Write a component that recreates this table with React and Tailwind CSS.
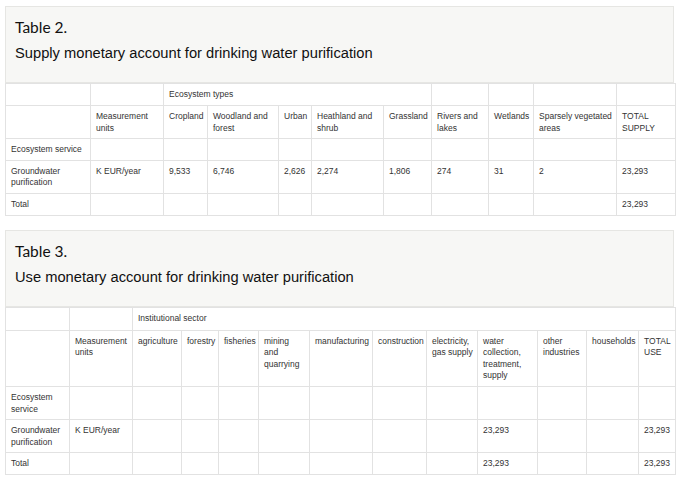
const T2_COLS = ['w-[85px]', 'w-[73px]', 'w-[44px]', 'w-[71px]', 'w-[33px]', 'w-[72px]', 'w-[48px]', 'w-[57px]', 'w-[45px]', 'w-[83px]', 'w-[59px]'];
const T3_COLS = ['w-[64px]', 'w-[63px]', 'w-[49px]', 'w-[37px]', 'w-[40px]', 'w-[51px]', 'w-[63px]', 'w-[54px]', 'w-[51px]', 'w-[60px]', 'w-[49px]', 'w-[52px]', 'w-[37px]'];

// line breaks follow the reference's wrapping
const cell = 'border border-[#e2e2e2] align-top pl-[5px] pr-[2px] pt-[5px] pb-[4px] text-left font-normal whitespace-pre-line';

function Caption({ num, title, className = '' }) {
  return (
    <div className={`bg-[#f7f7f5] border border-[#e6e6e3] pl-[9px] pt-[10px] w-[669px] h-[77px] ${className}`}>
      <div className="text-[15.5px] leading-[20px] text-[#111] font-['Lato','Open_Sans',sans-serif]">
        Table {num}.
      </div>
      <div className="mt-[6px] text-[14.7px] leading-[20px] text-[#111] font-['Liberation_Sans',Arial,sans-serif]">
        {title}
      </div>
    </div>
  );
}

function Grid({ cols, rows, heights }) {
  return (
    <table className="table-fixed border-collapse w-[670px] bg-white text-[8.5px] leading-[11.6px] text-[#333] font-['Liberation_Sans',Arial,sans-serif]">
      <colgroup>
        {cols.map((w, i) => (
          <col key={i} className={w} />
        ))}
      </colgroup>
      <tbody>
        {rows.map((row, r) => (
          <tr key={r} className={heights[r]}>
            {row.map((c, i) => {
              const [text, span] = Array.isArray(c) ? c : [c, 1];
              return (
                <td key={i} colSpan={span} className={cell}>
                  {text}
                </td>
              );
            })}
          </tr>
        ))}
      </tbody>
    </table>
  );
}

export default function App() {
  const t2 = [
    ['', '', ['Ecosystem types', 5], '', '', '', ''],
    ['', 'Measurement\nunits', 'Cropland', 'Woodland and\nforest', 'Urban', 'Heathland and\nshrub', 'Grassland', 'Rivers and\nlakes', 'Wetlands', 'Sparsely vegetated\nareas', 'TOTAL\nSUPPLY'],
    ['Ecosystem service', '', '', '', '', '', '', '', '', '', ''],
    ['Groundwater\npurification', 'K EUR/year', '9,533', '6,746', '2,626', '2,274', '1,806', '274', '31', '2', '23,293'],
    ['Total', '', '', '', '', '', '', '', '', '', '23,293'],
  ];
  const t3 = [
    ['', '', ['Institutional sector', 11]],
    ['', 'Measurement\nunits', 'agriculture', 'forestry', 'fisheries', 'mining\nand\nquarrying', 'manufacturing', 'construction', 'electricity,\ngas supply', 'water\ncollection,\ntreatment,\nsupply', 'other\nindustries', 'households', 'TOTAL\nUSE'],
    ['Ecosystem\nservice', '', '', '', '', '', '', '', '', '', '', '', ''],
    ['Groundwater\npurification', 'K EUR/year', '', '', '', '', '', '', '', '23,293', '', '', '23,293'],
    ['Total', '', '', '', '', '', '', '', '', '23,293', '', '', '23,293'],
  ];
  return (
    <div className="w-[680px] h-[477px] bg-white pl-[5px] pt-[6px] overflow-hidden">
      <Caption num="2" title="Supply monetary account for drinking water purification" />
      <Grid cols={T2_COLS} rows={t2} heights={['h-[22px]', 'h-[33px]', 'h-[21px]', 'h-[33px]', 'h-[21px]']} />
      <Caption num="3" title="Use monetary account for drinking water purification" className="mt-[14px]" />
      <Grid cols={T3_COLS} rows={t3} heights={['h-[23px]', 'h-[56px]', 'h-[33px]', 'h-[33px]', 'h-[21px]']} />
    </div>
  );
}
